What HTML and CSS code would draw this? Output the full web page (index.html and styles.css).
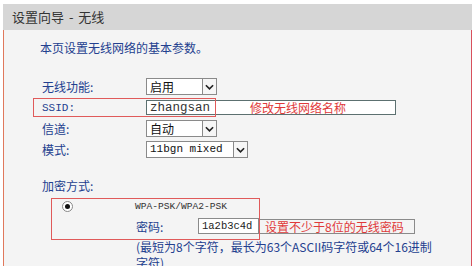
FILE: index.html
```html
<!DOCTYPE html>
<html lang="zh">
<head>
<meta charset="utf-8">
<link rel="stylesheet" href="styles.css">
</head>
<body>
<div class="page">
  <div class="header">设置向导 - 无线</div>
  <div class="panel">
    <p class="intro">本页设置无线网络的基本参数。</p>
    <div class="form">
      <div class="row">
        <span class="label">无线功能:</span>
        <div class="select s1"><span class="val">启用</span><span class="arrow"><svg viewBox="0 0 10 6" width="9" height="6"><path d="M1 1 L5 5 L9 1" fill="none" stroke="#222" stroke-width="1.8"/></svg></span></div>
      </div>
      <div class="row ssid">
        <span class="hl"></span>
        <span class="label mono-label">SSID:</span>
        <div class="input wide"><span class="mono">zhangsan</span><span class="note-red">修改无线网络名称</span></div>
      </div>
      <div class="row">
        <span class="label">信道:</span>
        <div class="select s1"><span class="val">自动</span><span class="arrow"><svg viewBox="0 0 10 6" width="9" height="6"><path d="M1 1 L5 5 L9 1" fill="none" stroke="#222" stroke-width="1.8"/></svg></span></div>
      </div>
      <div class="row">
        <span class="label">模式:</span>
        <div class="select s2"><span class="val mono-s">11bgn mixed</span><span class="arrow"><svg viewBox="0 0 10 6" width="9" height="6"><path d="M1 1 L5 5 L9 1" fill="none" stroke="#222" stroke-width="1.8"/></svg></span></div>
      </div>
      <div class="enc-title">加密方式:</div>
      <div class="enc">
        <span class="hl2"></span>
        <div class="enc-row">
          <span class="radio"><span class="dot"></span></span>
          <span class="wpa">WPA-PSK/WPA2-PSK</span>
        </div>
        <div class="enc-row pw">
          <span class="pw-label">密码:</span>
          <span class="pw-input">1a2b3c4d</span>
          <span class="pw-note">设置不少于8位的无线密码</span>
        </div>
        <p class="hint">(最短为8个字符，最长为63个ASCII码字符或64个16进制<br>字符)</p>
      </div>
    </div>
  </div>
</div>
</body>
</html>
```

FILE: styles.css
```css
* { box-sizing: border-box; }
html, body { margin: 0; padding: 0; }
body {
  background: #fff;
  font-family: "Noto Sans CJK SC", "Noto Sans", sans-serif;
  width: 474px;
  height: 266px;
  overflow: hidden;
}
.page {
  padding-top: 4px;
  padding-left: 3px;
  width: 472px;
}
.header {
  height: 26px;
  background: #d6d6d6;
  color: #333;
  font-size: 13px;
  line-height: 26px;
  padding-left: 9px;
  word-spacing: 2px;
}
.panel {
  background: #f4f4f4;
  border-left: 1px solid #e0785c;
  border-right: 1px solid #d8505c;
  height: 240px;
}
.intro {
  margin: 0;
  padding: 10px 0 0 36px;
  font-size: 12px;
  line-height: 16px;
  color: #23408f;
}
.form {
  padding-left: 38px;
  padding-top: 20px;
}
.row {
  position: relative;
  display: flex;
  align-items: center;
  height: 21px;
}
.label {
  width: 104px;
  font-size: 12px;
  color: #23408f;
  flex: none;
}
.mono-label {
  font-family: "Liberation Mono", monospace;
  font-size: 11px;
}
.select {
  display: flex;
  height: 17px;
  background: #fff;
  border: 1px solid #8a8a8a;
  border-right: none;
}
.s1 { width: 71px; }
.s2 { width: 102px; }
.val {
  flex: 1;
  font-size: 12px;
  line-height: 15px;
  padding-left: 3px;
  color: #111;
}
.mono-s {
  font-family: "Liberation Mono", monospace;
  font-size: 11px;
}
.arrow {
  width: 15px;
  height: 17px;
  margin-top: -1px;
  border: 1px solid #8a8a8a;
  background: #f6f6f6;
  display: flex;
  align-items: center;
  justify-content: center;
}
.input {
  display: flex;
  align-items: center;
  height: 15px;
  background: #fff;
  border: 1px solid #5c7070;
}
.wide { width: 250px; }
.mono {
  font-family: "Liberation Mono", monospace;
  font-size: 12.5px;
  color: #333;
  padding-left: 3px;
  width: 103px;
  flex: none;
}
.note-red {
  font-size: 12px;
  color: #e03a3a;
}
.hl {
  position: absolute;
  left: -9px;
  top: 1px;
  width: 183px;
  height: 19px;
  border: 1.5px solid #e05a5a;
  pointer-events: none;
}
.enc-title {
  margin-top: 18px;
  font-size: 12px;
  line-height: 16px;
  color: #23408f;
}
.enc {
  position: relative;
  margin-top: 4px;
  margin-left: -38px;
}
.hl2 {
  position: absolute;
  left: 47px;
  top: 0;
  width: 209px;
  height: 42px;
  border: 1.5px solid #e05a5a;
  pointer-events: none;
}
.enc-row {
  display: flex;
  align-items: center;
  height: 16px;
}
.radio {
  margin-left: 58px;
  width: 11px;
  height: 11px;
  border-radius: 50%;
  border: 1px solid #888;
  background: #fff;
  display: flex;
  align-items: center;
  justify-content: center;
}
.dot {
  width: 5px;
  height: 5px;
  border-radius: 50%;
  background: #111;
}
.wpa {
  margin-left: 62px;
  font-family: "Liberation Mono", monospace;
  font-size: 9.6px;
  color: #333;
}
.pw {
  margin-top: 4px;
}
.pw-label {
  margin-left: 132px;
  width: 62px;
  font-size: 12px;
  color: #23408f;
}
.pw-input {
  width: 61px;
  height: 16px;
  background: #fff;
  border: 1px solid #8a8a8a;
  font-family: "Liberation Mono", monospace;
  font-size: 10.5px;
  line-height: 14px;
  padding-left: 3px;
  color: #222;
}
.pw-note {
  width: 156px;
  height: 15px;
  border: 1px solid #8a8a8a;
  border-left: none;
  font-size: 12px;
  line-height: 13px;
  color: #e03a3a;
  padding-left: 6px;
  background: #f4f4f4;
}
.hint {
  margin: 5px 0 0 132px;
  font-size: 12px;
  line-height: 16px;
  color: #23408f;
}
```
